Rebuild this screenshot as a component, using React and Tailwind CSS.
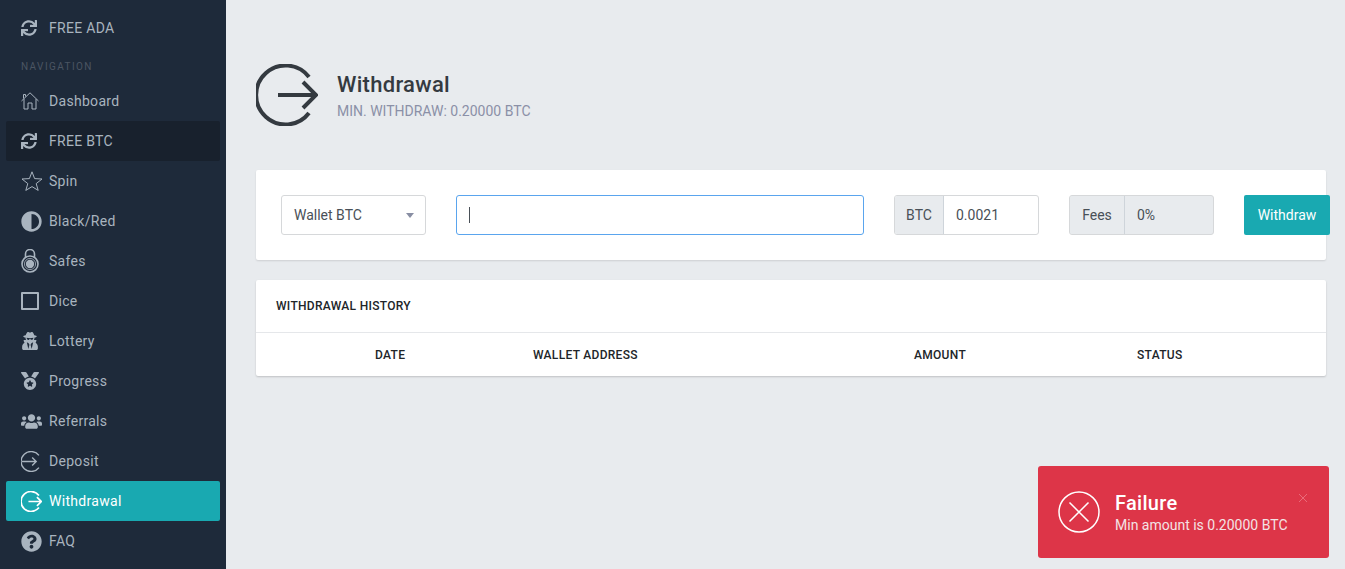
import React from "react";
import { FaSync, FaAdjust, FaUserSecret, FaMedal, FaUsers, FaQuestionCircle } from "react-icons/fa";

const HomeIcon = () => (
  <svg width="18" height="18" viewBox="0 0 18 18" fill="none" stroke="currentColor" strokeWidth="1">
    <path d="M.5 9 9 .8 17.5 9M3 7v10h4v-6h4v6h4V7M2.5 6.5V2.5h2v2" />
  </svg>
);

const StarIcon = () => (
  <svg width="22" height="20" viewBox="0 0 22 20" fill="none" stroke="currentColor" strokeWidth="1">
    <path d="M11 .8 13.6 7.6 21 8 15.2 12.6 17.2 19.4 11 15.6 4.8 19.4 6.8 12.6 1 8 8.4 7.6Z" />
  </svg>
);

const SafeIcon = () => (
  <svg width="18" height="24" viewBox="0 0 18 24" fill="none" stroke="currentColor">
    <path d="M4.5 9V5a4.5 4.5 0 0 1 9 0v4" strokeWidth="1.6" />
    <circle cx="9" cy="15" r="8" strokeWidth="1.6" />
    <circle cx="9" cy="15" r="4.2" fill="currentColor" stroke="none" />
    <circle cx="9" cy="15" r="5.6" strokeWidth="0.8" />
  </svg>
);

const CircleArrow = ({ size = 22, width = 1, inward = false }) => (
  <svg width={size} height={size} viewBox="0 0 62 62" fill="none" stroke="currentColor" strokeWidth={width}>
    <path d="M53 13A29.5 29.5 0 1 0 53 49" />
    {inward ? <path d="M3 31H44M33 19 45 31 33 43" /> : <path d="M22 31H60M47 18 60 31 47 44" />}
  </svg>
);

const nav = [
  { label: "Dashboard", icon: <HomeIcon /> },
  { label: "FREE BTC", icon: <FaSync size={16} />, dark: true },
  { label: "Spin", icon: <StarIcon /> },
  { label: "Black/Red", icon: <FaAdjust size={21} /> },
  { label: "Safes", icon: <SafeIcon /> },
  { label: "Dice", icon: <span className="block w-[18px] h-[18px] border-2 border-[#a9b4bf] rounded-[1px]" /> },
  { label: "Lottery", icon: <FaUserSecret size={18} /> },
  { label: "Progress", icon: <FaMedal size={18} /> },
  { label: "Referrals", icon: <FaUsers size={21} /> },
  { label: "Deposit", icon: <CircleArrow size={21} width={4} inward /> },
  { label: "Withdrawal", icon: <CircleArrow size={21} width={5} />, active: true },
  { label: "FAQ", icon: <FaQuestionCircle size={21} /> },
];

const NavItem = ({ label, icon, dark, active }) => (
  <div
    className={`flex items-center h-10 mx-[6px] pl-[15px] rounded-[2px] tracking-[0.3px] ${
      active ? "bg-[#19a9b1] text-white" : dark ? "bg-[#18212d] text-[#a9b4bf]" : "text-[#a9b4bf]"
    }`}
  >
    <span className="w-[28px] flex items-center shrink-0">{icon}</span>
    <span>{label}</span>
  </div>
);

const InputAddon = ({ children, className = "" }) => (
  <span className={`flex items-center justify-center h-full bg-[#e8ebee] text-[#495057] border-r border-[#ced4da] ${className}`}>
    {children}
  </span>
);

const App = () => {
  return (
    <div className="relative flex h-[569px] w-[1345px] overflow-hidden bg-[#e8ebee] text-[14px] font-['Roboto',sans-serif]">
      <aside className="w-[226px] shrink-0 bg-[#1e2a3a] pt-2">
        <NavItem label="FREE ADA" icon={<FaSync size={16} />} />
        <div className="h-[33px] pl-[21px] pt-[12px] text-[10px] leading-[14px] tracking-[1.4px] text-[#4b5562]">NAVIGATION</div>
        {nav.map((item) => (
          <NavItem key={item.label} {...item} />
        ))}
      </aside>

      <main className="flex-1 min-w-0 pl-[30px] pr-[19px] pt-[64px]">
        <div className="flex items-center h-[62px] gap-[19px] text-[#343a40]">
          <CircleArrow size={62} width={4} />
          <div>
            <h1 className="text-[22px] leading-[28px] font-medium tracking-[0.3px] text-[#343a40]">Withdrawal</h1>
            <p className="mt-[3px] text-[14px] leading-[18px] text-[#8b90a7]">MIN. WITHDRAW: 0.20000 BTC</p>
          </div>
        </div>

        <section className="flex items-center gap-[30px] h-[90px] mt-[44px] px-[25px] bg-white rounded-[2px] shadow-[0_1px_2px_rgba(0,0,0,0.12)]">
          <div className="flex items-center justify-between shrink-0 w-[145px] h-10 pl-3 pr-[11px] border border-[#d6d8da] rounded-[3px] text-[#495057]">
            <span>Wallet BTC</span>
            <span className="w-0 h-0 border-x-[4px] border-x-transparent border-t-[5px] border-t-[#888ea3]" />
          </div>
          <div className="flex items-center shrink-0 w-[408px] h-10 pl-3 border border-[#5aa5ee] rounded-[3px]">
            <span className="block w-px h-[16px] bg-[#495057]" />
          </div>
          <div className="flex items-center shrink-0 w-[145px] h-10 border border-[#d6d8da] rounded-[3px] overflow-hidden text-[#495057]">
            <InputAddon className="w-[49px]">BTC</InputAddon>
            <span className="pl-3">0.0021</span>
          </div>
          <div className="flex items-center shrink-0 w-[145px] h-10 border border-[#d6d8da] rounded-[3px] overflow-hidden bg-[#e8ebee] text-[#495057]">
            <InputAddon className="w-[55px]">Fees</InputAddon>
            <span className="pl-3">0%</span>
          </div>
          <button className="shrink-0 w-[86px] h-10 bg-[#19a9b1] text-white rounded-[2px]">Withdraw</button>
        </section>

        <section className="mt-[20px] h-[96px] bg-white rounded-[2px] shadow-[0_1px_2px_rgba(0,0,0,0.18)]">
          <div className="flex items-center h-[53px] px-5 border-b border-[#e5e7ea] text-[12px] font-medium tracking-[0.3px] text-[#212529]">
            WITHDRAWAL HISTORY
          </div>
          <div className="grid grid-cols-[277px_381px_223px_1fr] items-center h-[43px] text-[12px] font-medium tracking-[0.3px] text-[#212529]">
            <span className="pl-[119px]">DATE</span>
            <span>WALLET ADDRESS</span>
            <span>AMOUNT</span>
            <span>STATUS</span>
          </div>
        </section>
      </main>

      <div className="absolute left-[1038px] top-[466px] flex items-center w-[291px] h-[92px] pl-[20px] bg-[#dd3548] rounded-[3px] text-white">
        <svg width="42" height="42" viewBox="0 0 42 42" fill="none" stroke="currentColor" strokeWidth="1.5" className="shrink-0">
          <circle cx="21" cy="21" r="20" />
          <path d="M11.5 11.5 30.5 30.5M30.5 11.5 11.5 30.5" />
        </svg>
        <div className="ml-[15px]">
          <div className="text-[20px] leading-[24px] font-medium tracking-[0.3px]">Failure</div>
          <div className="mt-[1px] text-[14px] leading-[18px] text-[#f3e3e5]">Min amount is 0.20000 BTC</div>
        </div>
        <svg width="10" height="10" viewBox="0 0 10 10" stroke="#ee7a86" strokeWidth="0.8" className="absolute right-[21px] top-[27px]">
          <path d="M1 1 9 9M9 1 1 9" />
        </svg>
      </div>
    </div>
  );
};

export default App;
